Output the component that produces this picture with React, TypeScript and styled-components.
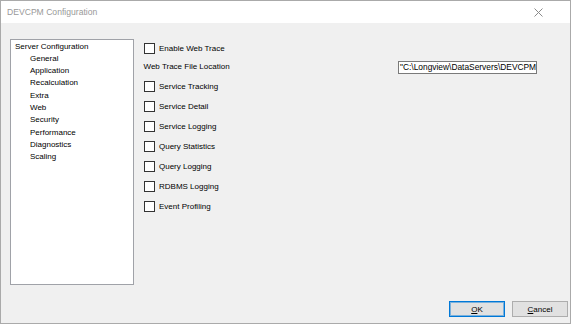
import { VFC } from "react";
import styled, { createGlobalStyle } from "styled-components";

const GlobalStyle = createGlobalStyle`
    html, body {
        margin: 0;
        padding: 0;
        background: #f0f0f0;
    }
    body {
        font-family: "Liberation Sans", Arial, sans-serif;
    }
`;

const treeChildren = [
    "General",
    "Application",
    "Recalculation",
    "Extra",
    "Web",
    "Security",
    "Performance",
    "Diagnostics",
    "Scaling",
];

const options = [
    "Service Tracking",
    "Service Detail",
    "Service Logging",
    "Query Statistics",
    "Query Logging",
    "RDBMS Logging",
    "Event Profiling",
];

const CheckRow: VFC<{ label: string; h?: number }> = ({ label, h = 20 }) => (
    <SCheckRow h={h}>
        <SCheckBox />
        <SCheckLabel>{label}</SCheckLabel>
    </SCheckRow>
);

export default function App() {
    return (
        <>
            <GlobalStyle />
            <SWindow>
                <STitleBar>
                    <STitle>DEVCPM Configuration</STitle>
                    <SClose>
                        <svg width="9" height="9" viewBox="0 0 9 9">
                            <path
                                d="M0.5 0.5 L8.5 8.5 M8.5 0.5 L0.5 8.5"
                                stroke="#8a8a8a"
                                strokeWidth="1"
                                fill="none"
                            />
                        </svg>
                    </SClose>
                </STitleBar>
                <SBody>
                    <SMain>
                        <STree>
                            <STreeItem>Server Configuration</STreeItem>
                            {treeChildren.map((c) => (
                                <STreeItem key={c} child>
                                    {c}
                                </STreeItem>
                            ))}
                        </STree>
                        <SOptions>
                            <CheckRow label="Enable Web Trace" h={19} />
                            <SLocationRow>
                                <SPlainLabel>Web Trace File Location</SPlainLabel>
                                <SPathInput>
                                    "C:\Longview\DataServers\DEVCPM
                                </SPathInput>
                            </SLocationRow>
                            {options.map((o) => (
                                <CheckRow key={o} label={o} />
                            ))}
                        </SOptions>
                    </SMain>
                    <SFooter>
                        <SButton primary>
                            <u>O</u>K
                        </SButton>
                        <SButton>
                            <u>C</u>ancel
                        </SButton>
                    </SFooter>
                </SBody>
            </SWindow>
        </>
    );
}

const SWindow = styled.div`
    width: 571px;
    height: 324px;
    box-sizing: border-box;
    border: 1px solid #aaaaaa;
    display: flex;
    flex-direction: column;
    background: #f0f0f0;
    overflow: hidden;
`;

const STitleBar = styled.div`
    height: 22px;
    background: #ffffff;
    display: flex;
    align-items: center;
    padding: 0 0 0 6px;
    flex-shrink: 0;
`;

const STitle = styled.div`
    font-size: 8.6px;
    color: #999999;
    flex: 1;
`;

const SClose = styled.div`
    width: 12px;
    height: 12px;
    display: flex;
    align-items: center;
    justify-content: center;
    margin-right: 26px;
    margin-top: 1px;
`;

const SBody = styled.div`
    flex: 1;
    display: flex;
    flex-direction: column;
`;

const SMain = styled.div`
    display: flex;
    padding: 16px 0 0 9px;
    gap: 9px;
`;

const STree = styled.div`
    width: 124px;
    height: 246px;
    box-sizing: border-box;
    border: 1px solid #a0a2a8;
    background: #ffffff;
    padding: 0.5px 0 0 4px;
`;

const STreeItem = styled.div<{ child?: boolean }>`
    font-size: 8px;
    line-height: 12.3px;
    color: #000000;
    padding-left: ${(p) => (p.child ? "15px" : "0")};
    white-space: nowrap;
`;

const SOptions = styled.div`
    width: 394px;
    display: flex;
    flex-direction: column;
`;

const SCheckRow = styled.div<{ h: number }>`
    height: ${(p) => p.h}px;
    display: flex;
    align-items: center;
    gap: 4px;
    padding-left: 1px;
`;

const SCheckBox = styled.div`
    width: 11px;
    height: 11px;
    box-sizing: border-box;
    border: 1px solid #333333;
    background: #ffffff;
    flex-shrink: 0;
`;

const SCheckLabel = styled.span`
    font-size: 8px;
    color: #000000;
    white-space: nowrap;
`;

const SLocationRow = styled.div`
    height: 18px;
    display: flex;
    align-items: center;
    justify-content: space-between;
    padding-left: 0.5px;
`;

const SPlainLabel = styled.span`
    font-size: 8px;
    color: #000000;
    white-space: nowrap;
    margin-top: -1px;
`;

const SPathInput = styled.div`
    width: 139px;
    height: 13px;
    box-sizing: border-box;
    border: 1px solid #7a7a7a;
    background: #ffffff;
    font-size: 8.4px;
    line-height: 11px;
    padding-left: 1px;
    white-space: nowrap;
    overflow: hidden;
    margin-top: 1px;
`;

const SFooter = styled.div`
    display: flex;
    justify-content: flex-end;
    gap: 7px;
    padding: 16px 2px 0 0;
`;

const SButton = styled.div<{ primary?: boolean }>`
    width: 56px;
    height: 16px;
    box-sizing: border-box;
    border: 1px solid ${(p) => (p.primary ? "#0078d7" : "#adadad")};
    box-shadow: ${(p) =>
        p.primary ? "inset 0 0 0 1px rgba(0, 120, 215, 0.45)" : "none"};
    background: #e1e1e1;
    font-size: 8px;
    display: flex;
    align-items: center;
    justify-content: center;
    color: #000000;
`;
